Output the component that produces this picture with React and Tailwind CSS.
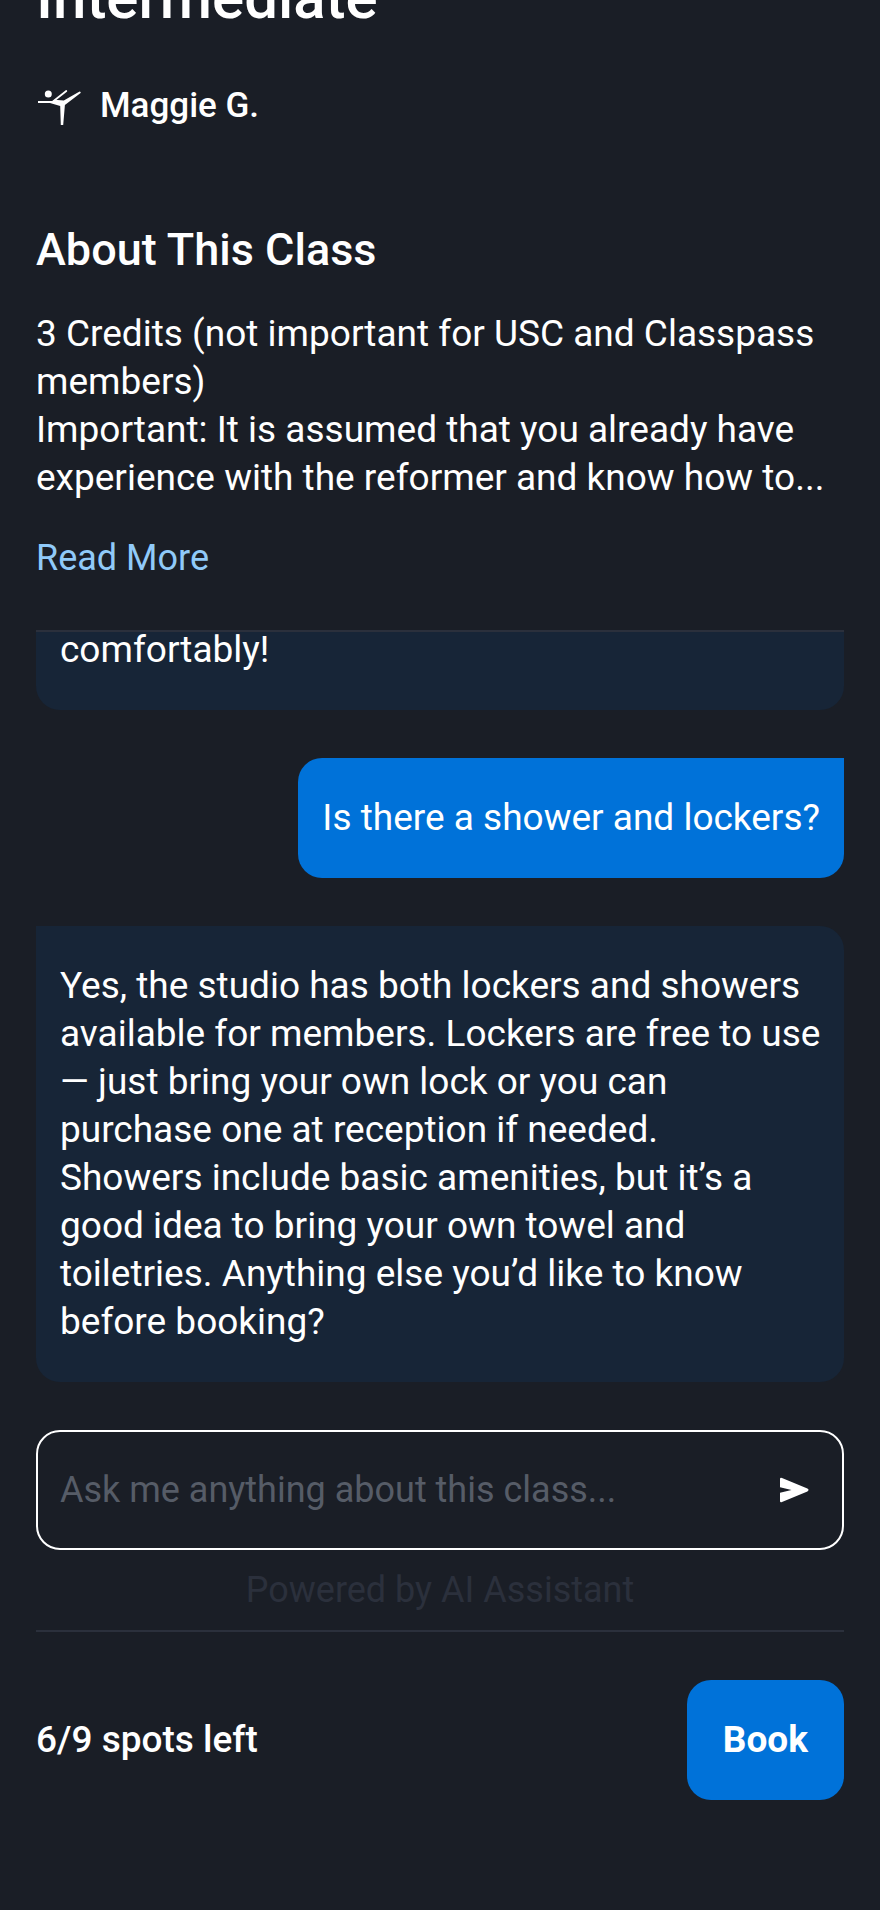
import { useState } from "react";

const messages = [
  {
    id: 1,
    from: "assistant",
    text: "comfortably!",
  },
  {
    id: 2,
    from: "user",
    text: "Is there a shower and lockers?",
  },
  {
    id: 3,
    from: "assistant",
    text: "Yes, the studio has both lockers and showers available for members. Lockers are free to use — just bring your own lock or you can purchase one at reception if needed.\nShowers include basic amenities, but it’s a good idea to bring your own towel and toiletries. Anything else you’d like to know before booking?",
  },
];

function PoseIcon() {
  return (
    <svg viewBox="0 0 48 48" className="size-12 shrink-0" fill="currentColor" aria-hidden="true">
      <circle cx="12.3" cy="12" r="3.5" />
      {/* arms */}
      <path d="M2 20h15" stroke="currentColor" strokeWidth="2" />
      <path d="M17 19.5L30.3 9" stroke="currentColor" strokeWidth="1.8" strokeLinecap="round" />
      {/* torso, standing leg and raised leg */}
      <path d="M14 21L18.5 17.8L27.8 18.4L43.6 9.4Q45.2 9.6 44.6 10.9L28.9 23L27.2 43H24.8L24.2 24Z" />
    </svg>
  );
}

function SendIcon() {
  return (
    <svg viewBox="0 0 48 48" className="size-12" fill="currentColor" aria-hidden="true">
      <path d="M8 13Q8 11.2 10 11.9L35.4 22.6Q37.8 24 35.4 25.4L10 36.1Q8 36.8 8 35V26.8L19.5 24L8 21.2Z" />
    </svg>
  );
}

function Message({ message }) {
  if (message.from === "user") {
    return (
      <p className="self-end bg-[#0072d9] px-6 py-9 rounded-3xl rounded-tr-none">
        {message.text}
      </p>
    );
  }
  return (
    <p className="bg-[#172537] pl-6 pr-5 py-9 rounded-3xl rounded-tl-none whitespace-pre-line">
      {message.text}
    </p>
  );
}

export default function App() {
  const [question, setQuestion] = useState("");

  return (
    <main className="min-h-screen bg-[#1a1e26] px-9 pb-28 text-white font-['Roboto',sans-serif] text-[36px] leading-[48px] overflow-hidden">
      {/* Class title and instructor */}
      <h1 className="-mt-[38px] text-[60px] leading-[72px] font-medium">Intermediate</h1>
      <div className="mt-12 flex items-center gap-4">
        <PoseIcon />
        <span className="text-[35px] font-medium">Maggie G.</span>
      </div>

      {/* About */}
      <section className="mt-24 pb-12 border-b-2 border-[#2b303c]">
        <h2 className="text-[45px] font-medium">About This Class</h2>
        <p className="mt-9 text-[37px]">
          3 Credits (not important for USC and Classpass members)
          <br />
          Important: It is assumed that you already have experience with the reformer and know how to...
        </p>
        <a href="#about" className="mt-8 block w-fit text-[#90caf9]">Read More</a>
      </section>

      {/* Chat, pinned to the newest message */}
      <section className="h-[750px] flex flex-col justify-end gap-12 overflow-hidden text-[37px]">
        {messages.map((message) => (
          <Message key={message.id} message={message} />
        ))}
      </section>

      <form
        onSubmit={(e) => e.preventDefault()}
        className="mt-12 h-[120px] px-[22px] flex items-center border-2 border-white rounded-3xl"
      >
        <input
          type="text"
          aria-label="Ask me anything about this class"
          placeholder="Ask me anything about this class..."
          value={question}
          onChange={(e) => setQuestion(e.target.value)}
          className="flex-1 min-w-0 bg-transparent outline-none placeholder:text-[#565c67]"
        />
        <button type="submit" aria-label="Send">
          <SendIcon />
        </button>
      </form>
      <p className="py-4 text-center text-[#2b303c] border-b-2 border-[#2b303c]">
        Powered by AI Assistant
      </p>

      {/* Booking bar */}
      <footer className="mt-12 flex items-center justify-between">
        <span className="text-[37px] font-medium">6/9 spots left</span>
        <button type="button" className="bg-[#0072d9] px-9 py-9 rounded-3xl text-[37px] font-bold">Book</button>
      </footer>
    </main>
  );
}
